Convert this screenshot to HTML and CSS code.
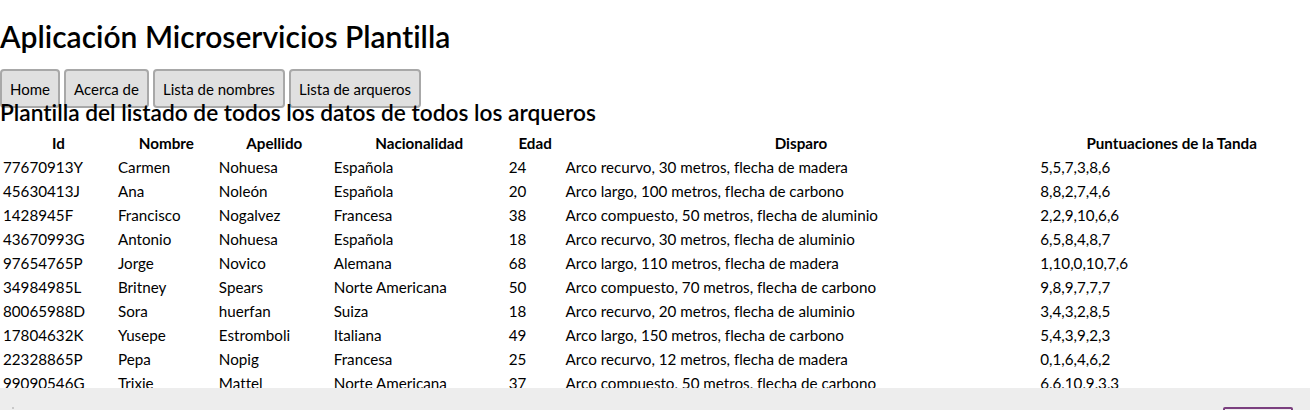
FILE: index.html
```html
<!DOCTYPE html>
<html lang="es">
<head>
<meta charset="utf-8">
<title>Aplicación Microservicios Plantilla</title>
<link rel="stylesheet" href="styles.css">
</head>
<body>
<h1 class="title">Aplicación Microservicios Plantilla</h1>
<nav class="nav">
  <button class="nav-btn">Home</button>
  <button class="nav-btn">Acerca de</button>
  <button class="nav-btn">Lista de nombres</button>
  <button class="nav-btn">Lista de arqueros</button>
</nav>
<h2 class="subtitle">Plantilla del listado de todos los datos de todos los arqueros</h2>
<table class="archers">
  <colgroup>
    <col class="c-id"><col class="c-nombre"><col class="c-apellido"><col class="c-nac"><col class="c-edad"><col class="c-disparo"><col class="c-punt">
  </colgroup>
  <thead>
    <tr><th>Id</th><th>Nombre</th><th>Apellido</th><th>Nacionalidad</th><th>Edad</th><th>Disparo</th><th>Puntuaciones de la Tanda</th></tr>
  </thead>
  <tbody>
    <tr><td>77670913Y</td><td>Carmen</td><td>Nohuesa</td><td>Española</td><td>24</td><td>Arco recurvo, 30 metros, flecha de madera</td><td>5,5,7,3,8,6</td></tr>
    <tr><td>45630413J</td><td>Ana</td><td>Noleón</td><td>Española</td><td>20</td><td>Arco largo, 100 metros, flecha de carbono</td><td>8,8,2,7,4,6</td></tr>
    <tr><td>1428945F</td><td>Francisco</td><td>Nogalvez</td><td>Francesa</td><td>38</td><td>Arco compuesto, 50 metros, flecha de aluminio</td><td>2,2,9,10,6,6</td></tr>
    <tr><td>43670993G</td><td>Antonio</td><td>Nohuesa</td><td>Española</td><td>18</td><td>Arco recurvo, 30 metros, flecha de aluminio</td><td>6,5,8,4,8,7</td></tr>
    <tr><td>97654765P</td><td>Jorge</td><td>Novico</td><td>Alemana</td><td>68</td><td>Arco largo, 110 metros, flecha de madera</td><td>1,10,0,10,7,6</td></tr>
    <tr><td>34984985L</td><td>Britney</td><td>Spears</td><td>Norte Americana</td><td>50</td><td>Arco compuesto, 70 metros, flecha de carbono</td><td>9,8,9,7,7,7</td></tr>
    <tr><td>80065988D</td><td>Sora</td><td>huerfan</td><td>Suiza</td><td>18</td><td>Arco recurvo, 20 metros, flecha de aluminio</td><td>3,4,3,2,8,5</td></tr>
    <tr><td>17804632K</td><td>Yusepe</td><td>Estromboli</td><td>Italiana</td><td>49</td><td>Arco largo, 150 metros, flecha de carbono</td><td>5,4,3,9,2,3</td></tr>
    <tr><td>22328865P</td><td>Pepa</td><td>Nopig</td><td>Francesa</td><td>25</td><td>Arco recurvo, 12 metros, flecha de madera</td><td>0,1,6,4,6,2</td></tr>
    <tr><td>99090546G</td><td>Trixie</td><td>Mattel</td><td>Norte Americana</td><td>37</td><td>Arco compuesto, 50 metros, flecha de carbono</td><td>6,6,10,9,3,3</td></tr>
  </tbody>
</table>
<div class="footer-bar">
  <span class="footer-dot"></span>
  <span class="footer-btn"></span>
</div>
</body>
</html>
```

FILE: styles.css
```css
html, body {
  margin: 0;
  padding: 0;
  background: #ffffff;
  color: #000000;
  font-family: Lato, "Noto Sans", sans-serif;
  font-variant-ligatures: none;
}

.title {
  margin: 0;
  padding-top: 18px;
  font-size: 30px;
  font-weight: 600;
  line-height: 36px;
}

.nav {
  margin-top: 15px;
  height: 30px;
  white-space: nowrap;
}

.nav-btn {
  font-family: inherit;
  font-variant-ligatures: none;
  font-size: 15px;
  color: #000;
  background: #e0e0e0;
  border: 2px solid #a8a8a8;
  border-radius: 4px;
  height: 39px;
  padding: 0 8px;
  margin: 0;
  vertical-align: top;
}

.subtitle {
  margin: 0;
  font-size: 22.7px;
  font-weight: 600;
  line-height: 28px;
}

.archers {
  width: 1306px;
  border-spacing: 2px 0;
  font-size: 15.2px;
  margin-top: 4px;
}

.archers th {
  font-weight: 700;
  text-align: center;
  height: 24px;
  padding: 0 1px;
}

.archers td {
  text-align: left;
  height: 24px;
  padding: 0 0 0 1px;
  white-space: nowrap;
}

.c-id { width: 113px; }
.c-nombre { width: 99px; }
.c-apellido { width: 113px; }
.c-nac { width: 173px; }
.c-edad { width: 55px; }
.c-disparo { width: 473px; }
.c-punt { width: 265px; }

.footer-bar {
  position: fixed;
  left: 0;
  right: 0;
  bottom: 0;
  height: 22px;
  background: #ededed;
}

.footer-dot {
  position: absolute;
  left: 12px;
  bottom: 1px;
  width: 2px;
  height: 2px;
  background: #c8c8c8;
}

.footer-btn {
  position: absolute;
  left: 1223px;
  top: 19px;
  width: 66px;
  height: 10px;
  border: 2px solid #7b3f7f;
  border-radius: 2px;
}
```
